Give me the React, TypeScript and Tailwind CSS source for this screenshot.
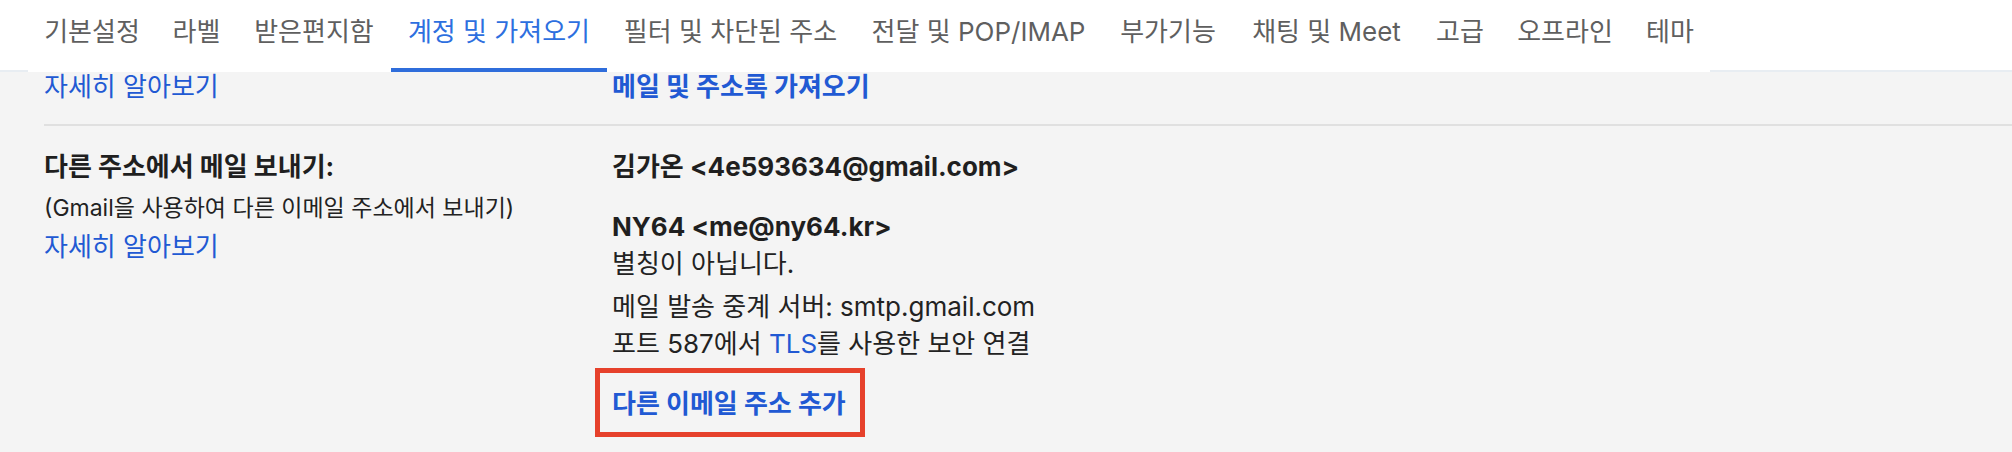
import React from 'react';

const tabs = [
  { label: '기본설정', w: 'w-[128px]' },
  { label: '라벨', w: 'w-[81px]' },
  { label: '받은편지함', w: 'w-[154px]' },
  { label: '계정 및 가져오기', w: 'w-[216px]', active: true },
  { label: '필터 및 차단된 주소', w: 'w-[247px]' },
  { label: '전달 및 POP/IMAP', w: 'w-[249px]' },
  { label: '부가기능', w: 'w-[130px]' },
  { label: '채팅 및 Meet', w: 'w-[187px]' },
  { label: '고급', w: 'w-[80px]' },
  { label: '오프라인', w: 'w-[130px]' },
  { label: '테마', w: 'w-[80px]' },
];

const App: React.FC = () => {
  return (
    <div className="w-[2012px] h-[452px] overflow-hidden bg-[#f4f4f4] font-['Inter','Noto_Sans_CJK_KR',sans-serif] text-[26px] leading-[37px] text-[#1f1f1f]">
      {/* settings tabs */}
      <div className="h-[72px] bg-white border-b-2 border-[#e8edf2]">
        <div className="ml-[28px] flex h-[72px] w-[1682px] bg-white">
          {tabs.map((tab) => (
            <div
              key={tab.label}
              className={`${tab.w} flex shrink-0 justify-center whitespace-nowrap pt-[13px] border-b-4 ${
                tab.active ? 'border-[#2f6ddb] text-[#2d6fdf]' : 'border-transparent text-[#5f5f5f]'
              }`}
            >
              {tab.label}
            </div>
          ))}
        </div>
      </div>

      <div className="h-[380px] overflow-hidden">
        {/* previous row, scrolled under the tabs */}
        <div className="-mt-[4px] ml-[44px] flex border-b-2 border-[#e0e0e0] pb-[19px]">
          <div className="w-[568px] shrink-0">
            <a className="text-[#2159d3]">자세히 알아보기</a>
          </div>
          <div>
            <a className="font-bold text-[#2159d3]">메일 및 주소록 가져오기</a>
          </div>
        </div>

        {/* send mail as */}
        <div className="ml-[44px] flex pt-[22px]">
          <div className="w-[568px] shrink-0">
            <div className="font-bold">다른 주소에서 메일 보내기:</div>
            <div className="mt-[5px] text-[23px] text-[#222]">(Gmail을 사용하여 다른 이메일 주소에서 보내기)</div>
            <a className="mt-[1px] block text-[#2159d3]">자세히 알아보기</a>
          </div>
          <div className="flex flex-col">
            <div className="font-bold">김가온 &lt;4e593634@gmail.com&gt;</div>
            <div className="mt-[23px] font-bold">NY64 &lt;me@ny64.kr&gt;</div>
            <div className="text-[#222]">별칭이 아닙니다.</div>
            <div className="mt-[6px] text-[#222]">메일 발송 중계 서버: smtp.gmail.com</div>
            <div className="text-[#222]">
              포트 587에서 <a className="text-[#2159d3]">TLS</a>를 사용한 보안 연결
            </div>
            <div className="mt-[23px]">
              <span className="relative inline-block">
                <a className="font-bold text-[#2159d3]">다른 이메일 주소 추가</a>
                <span className="absolute -left-[17px] -top-[17px] -right-[19px] -bottom-[15px] border-[5px] border-[#e6412b]" />
              </span>
            </div>
          </div>
        </div>
      </div>
    </div>
  );
};

export default App;
